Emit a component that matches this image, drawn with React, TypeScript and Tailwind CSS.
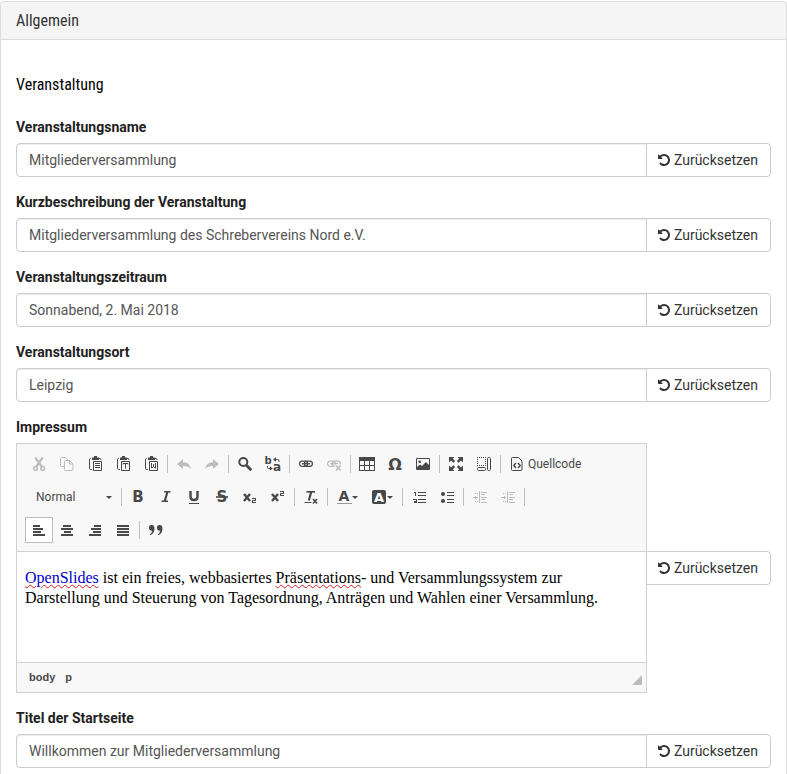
import type { ReactNode } from 'react';

const glyphFont = '"DejaVu Sans", sans-serif';

function Icon({ children, crisp = false }: { children: ReactNode; crisp?: boolean }) {
  return (
    <svg
      className="size-4 shrink-0 overflow-visible"
      viewBox="0 0 16 16"
      fill="none"
      stroke="currentColor"
      aria-hidden="true"
      shapeRendering={crisp ? 'crispEdges' : 'auto'}
    >
      {children}
    </svg>
  );
}

function Letter({ x, y, size, children, bold = true, color = 'currentColor' }: {
  x: number; y: number; size: number; children: string; bold?: boolean; color?: string;
}) {
  return (
    <text
      x={x}
      y={y}
      fontSize={size}
      fontFamily={glyphFont}
      fontWeight={bold ? 700 : 400}
      textAnchor="middle"
      fill={color}
      stroke="none"
    >
      {children}
    </text>
  );
}

const clipboard = (
  <>
    <path d="M4 2.500H3.500a1 1 0 0 0-1 1v9a1 1 0 0 0 1 1H5M12 2.500h1a.8.8 0 0 1 .8.800V4" />
    <path d="M5 1.500h2V0h3v1.500h2V4H5z" fill="currentColor" stroke="none" />
    <path d="M6.500 5.500h8v9h-8z" />
  </>
);

const chain = (
  <>
    <rect x="1.600" y="5.100" width="8" height="5.300" rx="2.600" strokeWidth="1.200" />
    <rect x="6.400" y="5.100" width="8" height="5.300" rx="2.600" strokeWidth="1.200" />
    <path d="M4 7.750h8" strokeWidth="1.300" />
  </>
);

const icons = {
  cut: (
    <Icon>
      <path d="M4.300 1.500 11 11M11.700 1.500 5 11" strokeWidth="2.200" />
      <circle cx="4.500" cy="12.500" r="1.900" strokeWidth="1.500" />
      <circle cx="11.700" cy="12.500" r="1.900" strokeWidth="1.500" />
    </Icon>
  ),
  copy: (
    <Icon>
      <path d="M5 10.500H2.500a1 1 0 0 1-1-1v-7a1 1 0 0 1 1-1h4l3 3" />
      <path d="M6.500 4.500h4l3.500 3.500v5.500a1 1 0 0 1-1 1H6.500a1 1 0 0 1-1-1v-8a1 1 0 0 1 1-1zM10.500 4.500V8H14" />
    </Icon>
  ),
  paste: <Icon>{clipboard}<path d="M8 7.500h5M8 9.500h5M8 11.500h5" /></Icon>,
  pasteText: <Icon>{clipboard}<path d="M8 8.500v-1h5v1M10.500 7.500v5" /></Icon>,
  pasteWord: <Icon>{clipboard}<path d="M8.500 7v5h.5l1.500-1.500L12 12h.5V7M10.500 8v3" /></Icon>,
  undo: (
    <Icon><path d="M1 8l6-5v3.200c4.500 0 7.200 2.200 7.800 6.800-1.800-2.200-4-3-7.800-3V13z" fill="currentColor" stroke="none" /></Icon>
  ),
  redo: (
    <Icon><path d="M15 8 9 3v3.200c-4.500 0-7.200 2.200-7.800 6.800 1.800-2.200 4-3 7.800-3V13z" fill="currentColor" stroke="none" /></Icon>
  ),
  find: (
    <Icon><circle cx="6.300" cy="6" r="4" strokeWidth="2" /><path d="m9.300 9.200 5 5" strokeWidth="2.800" /></Icon>
  ),
  replace: (
    <Icon>
      <Letter x={3} y={8} size={10}>b</Letter>
      <Letter x={12} y={15} size={12}>a</Letter>
      <path d="M10 3.500h2.500a1.500 1.500 0 0 1 1.500 1.500v1M2.500 10v1.500a1 1 0 0 0 1 1H5.500" />
      <path d="M8 3.500 11 1.300v4.400zM7.800 12.500l-3 2.200v-4.400z" fill="currentColor" stroke="none" />
    </Icon>
  ),
  link: <Icon>{chain}</Icon>,
  unlink: (
    <Icon>
      {chain}
      <path d="M8.500 8.500h7v7h-7z" fill="#f8f8f8" stroke="none" />
      <path d="m10 9.500 4.500 5M14.500 9.500l-4.500 5" strokeWidth="1.600" />
    </Icon>
  ),
  table: (
    <Icon crisp>
      <path d="M0 1h16v4H0z" fill="currentColor" stroke="none" />
      <path d="M.5 4.500v10h15v-10M.5 9.500h15M5.500 5v10M10.500 5v10" />
    </Icon>
  ),
  omega: <Icon><Letter x={8} y={14} size={16}>Ω</Letter></Icon>,
  image: (
    <Icon>
      <path d="M1.500 2.500h13v11h-13z" />
      <circle cx="4.700" cy="5.700" r="1.300" fill="currentColor" stroke="none" />
      <path d="M2 13v-2l3-2.500 2 1.500 4-4 3.500 3.500V13z" fill="currentColor" stroke="none" />
    </Icon>
  ),
  maximize: (
    <Icon>
      <path d="M1 1h5.500L4.800 2.700l2.400 2.400-1.700 1.700-2.400-2.400L1 6.500zM15 1H9.500l1.700 1.700-2.400 2.400 1.700 1.700 2.400-2.400L15 6.500zM1 15h5.500l-1.700-1.700 2.400-2.400-1.700-1.700-2.400 2.400L1 9.500zM15 15H9.500l1.700-1.700-2.400-2.400 1.700-1.700 2.400 2.400L15 9.500z" fill="currentColor" stroke="none" />
    </Icon>
  ),
  blocks: (
    <Icon>
      <path d="M1 1.500h9M1 9.500h9M1.500 1v9M9.500 1v9" strokeDasharray="1 1" shapeRendering="crispEdges" />
      <rect x="11.500" y="1.500" width="3" height="13" rx="1.200" />
      <rect x="1.500" y="11.500" width="8" height="3" rx="1.200" />
    </Icon>
  ),
  source: (
    <Icon>
      <path d="M3.500 1.500h6l3.500 3.500v8.500a1 1 0 0 1-1 1H3.500a1 1 0 0 1-1-1v-11a1 1 0 0 1 1-1z" />
      <path d="M7 7 4.800 9.500 7 12M9 7l2.200 2.500L9 12" strokeWidth="1.400" />
    </Icon>
  ),
  bold: <Icon><Letter x={8} y={13} size={15}>B</Letter></Icon>,
  italic: (
    <Icon>
      <path d="M6 2.700h6.500M3.500 12.300H10" strokeWidth="1.600" />
      <path d="M9.600 2.500 6.600 12.500" strokeWidth="2.200" />
    </Icon>
  ),
  underline: (
    <Icon><path d="M4.500 2v5.500c0 4.700 7 4.700 7 0V2" strokeWidth="2.400" /><path d="M3 14.500h10" /></Icon>
  ),
  strike: (
    <Icon><Letter x={8} y={13} size={15}>S</Letter><path d="M2 8h12" strokeWidth="1.600" /></Icon>
  ),
  subscript: (
    <Icon>
      <path d="m2 5 6 7M8 5l-6 7" strokeWidth="2.400" />
      <path d="M10 9.500h3.500v2h-3v2H14" shapeRendering="crispEdges" />
    </Icon>
  ),
  superscript: (
    <Icon>
      <path d="m2 5 6 7M8 5l-6 7" strokeWidth="2.400" />
      <path d="M10 2.500h3.500v2h-3v2H14" shapeRendering="crispEdges" />
    </Icon>
  ),
  clear: (
    <Icon>
      <path d="M3.500 2.800h8.500" strokeWidth="1.700" />
      <path d="M8.300 2.500 5.800 11.500" strokeWidth="2.200" />
      <path d="M1.500 13.500h7" />
      <path d="m10 10 4 4.500M14 10l-4 4.500" strokeWidth="1.600" />
    </Icon>
  ),
  textColor: (
    <Icon><Letter x={8} y={12} size={14}>A</Letter><path d="M1 14.500h15" stroke="#999" shapeRendering="crispEdges" /></Icon>
  ),
  bgColor: (
    <Icon>
      <rect x="1" y="1" width="14" height="14" rx="2" fill="currentColor" stroke="none" />
      <Letter x={8} y={13} size={13} color="#fff">A</Letter>
    </Icon>
  ),
  numbered: (
    <Icon crisp>
      <path d="M3 3.500h2M4.500 3v4M2 10.500h3.500v1.500H3v1.500h3" />
      <path d="M7 3.500h8M7 6.500h8M7 10.500h8M7 13.500h8" />
    </Icon>
  ),
  bulleted: (
    <Icon>
      <circle cx="4" cy="5" r="2" fill="currentColor" stroke="none" />
      <circle cx="4" cy="12" r="2" fill="currentColor" stroke="none" />
      <path d="M8 3.500h7M8 6.500h7M8 10.500h7M8 13.500h7" />
    </Icon>
  ),
  outdent: (
    <Icon crisp>
      <path d="M7.500 2v12M9 3.500h6M9 5.500h4M9 8.500h6M9 10.500h4M9 13.500h6M1 8.500h5M3.500 7v3" />
      <path d="M3 4.500h3M3 12.500h3" strokeDasharray="1 1" />
    </Icon>
  ),
  indent: (
    <Icon crisp>
      <path d="M7.500 2v12M9 3.500h6M9 5.500h4M9 8.500h6M9 10.500h4M9 13.500h6M1 8.500h5M4.500 7v3" />
      <path d="M3 4.500h3M3 12.500h3" strokeDasharray="1 1" />
    </Icon>
  ),
  left: <Icon crisp><path d="M2 4h7M2 7h10M2 10h8M2 13h12" strokeWidth="2" /></Icon>,
  center: <Icon crisp><path d="M4 4h8M2 7h12M5 10h7M2 13h12" strokeWidth="2" /></Icon>,
  right: <Icon crisp><path d="M7 4h7M4 7h10M6 10h8M2 13h12" strokeWidth="2" /></Icon>,
  justify: <Icon crisp><path d="M2 4h12M2 7h12M2 10h12M2 13h12" strokeWidth="2" /></Icon>,
  quote: (
    <Icon>
      <path d="M1 6a2.600 2.600 0 0 1 5.400-.5C6.800 9 5.500 12 2.300 13.200l-.5-.9c1.500-.9 2.200-2 2.300-3.600C2.200 9 1 7.700 1 6zM9 6a2.600 2.600 0 0 1 5.400-.5c.4 3.500-.9 6.500-4.100 7.700l-.5-.9c1.500-.9 2.200-2 2.300-3.600C10.200 9 9 7.700 9 6z" fill="currentColor" stroke="none" />
    </Icon>
  ),
};

function Tool({ icon, title, disabled = false, active = false, menu = false, label }: {
  icon: keyof typeof icons; title: string; disabled?: boolean; active?: boolean; menu?: boolean; label?: string;
}) {
  return (
    <button
      type="button"
      title={title}
      aria-label={title}
      disabled={disabled}
      className={`flex h-[26px] items-center border text-xs ${menu ? 'w-[35px] pl-[5px]' : 'px-[5px]'} ${
        active ? 'border-[#bcbcbc] bg-white' : 'border-transparent'
      } ${disabled ? 'text-[#bdbdbd]' : 'text-[#484848]'}`}
    >
      {icons[icon]}
      {menu && <Caret />}
      {label && <span className="ml-[3px]">{label}</span>}
    </button>
  );
}

function Caret() {
  return (
    <svg className="h-[3px] w-[6px] shrink-0" viewBox="0 0 6 3" aria-hidden="true">
      <path d="M0 0h6L3 3z" fill="#484848" />
    </svg>
  );
}

function Separator() {
  return <span className="mx-[2px] h-[18px] w-px bg-[#c0c0c0]" />;
}

function ResetButton() {
  return (
    <button
      type="button"
      className="-ml-px flex h-[34px] shrink-0 items-center gap-1 rounded-r border border-[#ccc] bg-white pr-3 pl-[11px] text-[#333]"
    >
      <svg className="h-[14px] w-[12px]" viewBox="0 0 1536 1792" aria-hidden="true">
        <path
          fill="currentColor"
          d="M1536 896q0 156-61 298t-164 245-245 164-298 61q-172 0-327-72.500T177 1387q-7-10-6.500-22.500t8.500-20.500l137-138q10-9 25-9 16 2 23 12 73 95 179 147t225 52q104 0 198.500-40.500T1130 1259t109.500-163.500T1280 896t-40.500-198.500T1130 534 966.500 424.500 768 384q-98 0-188 35.500T420 521l137 138q31 30 14 69-17 40-59 40H64q-26 0-45-19T0 704V256q0-42 40-59 39-17 69 14l130 129q107-101 244.500-156.500T768 128q156 0 298 61t245 164 164 245 61 298z"
        />
      </svg>
      Zurücksetzen
    </button>
  );
}

const labelClass = 'mb-[6px] block h-5 w-fit font-bold text-[#222]';

function Field({ id, label, value }: { id: string; label: string; value: string }) {
  return (
    <div className="mb-[15px] last:mb-0">
      <label htmlFor={id} className={labelClass}>{label}</label>
      <div className="flex">
        <input
          id={id}
          type="text"
          defaultValue={value}
          className="h-[34px] min-w-0 flex-1 rounded-l border border-[#ccc] bg-white px-3 text-[#555] shadow-[inset_0_1px_1px_rgba(0,0,0,0.075)] outline-none"
        />
        <ResetButton />
      </div>
    </div>
  );
}

function Editor() {
  const misspelt = 'underline decoration-[#d02020] decoration-wavy decoration-1';
  return (
    <div className="min-w-0 flex-1 border border-[#d1d1d1]">
      <div className="flex flex-col gap-[7px] border-b border-[#d1d1d1] bg-[#f8f8f8] px-2 pt-[7px] pb-2">
        <div className="flex items-center">
          <Tool icon="cut" title="Ausschneiden" disabled />
          <Tool icon="copy" title="Kopieren" disabled />
          <Tool icon="paste" title="Einfügen" />
          <Tool icon="pasteText" title="Als Klartext einfügen" />
          <Tool icon="pasteWord" title="Aus Word einfügen" />
          <Separator />
          <Tool icon="undo" title="Rückgängig" disabled />
          <Tool icon="redo" title="Wiederherstellen" disabled />
          <Separator />
          <Tool icon="find" title="Suchen" />
          <Tool icon="replace" title="Ersetzen" />
          <Separator />
          <Tool icon="link" title="Link einfügen" />
          <Tool icon="unlink" title="Link entfernen" disabled />
          <Separator />
          <Tool icon="table" title="Tabelle" />
          <Tool icon="omega" title="Sonderzeichen" />
          <Tool icon="image" title="Bild" />
          <Separator />
          <Tool icon="maximize" title="Maximieren" />
          <Tool icon="blocks" title="Blöcke anzeigen" />
          <Separator />
          <Tool icon="source" title="Quellcode" label="Quellcode" />
        </div>
        <div className="flex items-center">
          <div className="relative flex h-[26px] w-[94px] items-center">
            <select
              aria-label="Format"
              className="h-full w-full appearance-none bg-transparent pl-[11px] text-xs text-[#484848] outline-none"
            >
              <option>Normal</option>
            </select>
            <span className="pointer-events-none absolute right-[7px]"><Caret /></span>
          </div>
          <Separator />
          <Tool icon="bold" title="Fett" />
          <Tool icon="italic" title="Kursiv" />
          <Tool icon="underline" title="Unterstrichen" />
          <Tool icon="strike" title="Durchgestrichen" />
          <Tool icon="subscript" title="Tiefgestellt" />
          <Tool icon="superscript" title="Hochgestellt" />
          <Separator />
          <Tool icon="clear" title="Formatierung entfernen" />
          <Separator />
          <Tool icon="textColor" title="Textfarbe" menu />
          <Tool icon="bgColor" title="Hintergrundfarbe" menu />
          <Separator />
          <Tool icon="numbered" title="Nummerierte Liste" />
          <Tool icon="bulleted" title="Liste" />
          <Separator />
          <Tool icon="outdent" title="Einzug verkleinern" disabled />
          <Tool icon="indent" title="Einzug erhöhen" disabled />
          <Separator />
        </div>
        <div className="flex items-center">
          <Tool icon="left" title="Linksbündig" active />
          <Tool icon="center" title="Zentriert" />
          <Tool icon="right" title="Rechtsbündig" />
          <Tool icon="justify" title="Blocksatz" />
          <Separator />
          <Tool icon="quote" title="Zitatblock" />
        </div>
      </div>
      <div
        role="textbox"
        aria-multiline="true"
        aria-labelledby="impressum-label"
        contentEditable
        suppressContentEditableWarning
        spellCheck={false}
        className="min-h-[110px] bg-white px-2 py-4 font-['Liberation_Serif',serif] text-base leading-5 text-black outline-none"
      >
        <p>
          <a href="#openslides" className={`text-[#0000cc] ${misspelt}`}>OpenSlides</a> ist ein freies, webbasiertes{' '}
          <span className={misspelt}>Präsentations</span>- und Versammlungssystem zur Darstellung und Steuerung von
          Tagesordnung, Anträgen und Wahlen einer Versammlung.
        </p>
      </div>
      <div className="flex h-[30px] items-center justify-between border-t border-[#d1d1d1] bg-[#f8f8f8] pr-1 pl-3 font-['Liberation_Sans',sans-serif] text-[11px] font-bold text-[#484848]">
        <div className="flex gap-[10px] pb-[2px]">
          <span>body</span>
          <span>p</span>
        </div>
        <svg className="mb-[7px] size-[10px] self-end" viewBox="0 0 10 10" aria-hidden="true">
          <path d="M10 0v10H0z" fill="#bcbcbc" />
        </svg>
      </div>
    </div>
  );
}

export default function App() {
  const heading = "font-['Roboto_Condensed','Liberation_Sans_Narrow',sans-serif] text-base leading-5";
  return (
    <main className="bg-white pt-px font-[Roboto,sans-serif] text-sm leading-5">
      <section className="rounded-t border border-b-0 border-[#ddd]">
        <header className="rounded-t border-b border-[#ddd] bg-[#f5f5f5] px-[15px] pt-[9px] pb-2">
          <h1 className={`${heading} text-[#333]`}>Allgemein</h1>
        </header>
        <div className="px-[15px] pt-[35px] pb-[6px]">
          <h2 className={`${heading} mb-[22px] text-black`}>Veranstaltung</h2>
          <Field id="name" label="Veranstaltungsname" value="Mitgliederversammlung" />
          <Field id="description" label="Kurzbeschreibung der Veranstaltung" value="Mitgliederversammlung des Schrebervereins Nord e.V." />
          <Field id="date" label="Veranstaltungszeitraum" value="Sonnabend, 2. Mai 2018" />
          <Field id="location" label="Veranstaltungsort" value="Leipzig" />
          <div className="mb-[15px]">
            <div id="impressum-label" className={labelClass}>Impressum</div>
            <div className="flex items-center">
              <Editor />
              <ResetButton />
            </div>
          </div>
          <Field id="title" label="Titel der Startseite" value="Willkommen zur Mitgliederversammlung" />
        </div>
      </section>
    </main>
  );
}
